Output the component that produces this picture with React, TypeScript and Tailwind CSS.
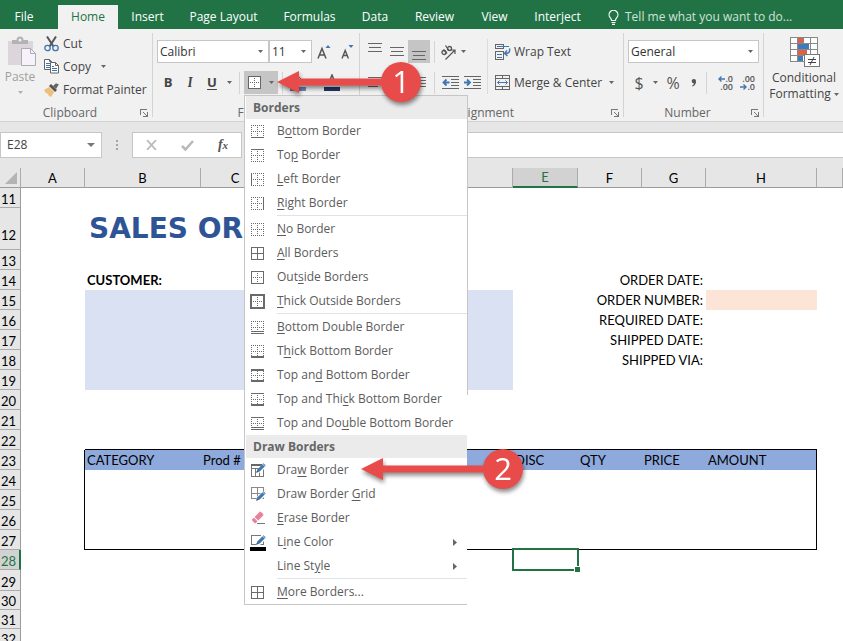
import React from "react";

type Side = "dot" | "thin" | "thick" | "double";

const TABS: { name: string; width: string }[] = [
  { name: "Insert", width: "w-[59px]" },
  { name: "Page Layout", width: "w-[93px]" },
  { name: "Formulas", width: "w-[79px]" },
  { name: "Data", width: "w-[52px]" },
  { name: "Review", width: "w-[67px]" },
  { name: "View", width: "w-[53px]" },
  { name: "Interject", width: "w-[73px]" },
];

function Caret({ dim = false }: { dim?: boolean }) {
  return (
    <svg width="5" height="3" viewBox="0 0 5 3" className={dim ? "shrink-0 text-[#b0b0b0]" : "shrink-0 text-[#666]"} aria-hidden="true">
      <path d="M0 0h5L2.500 3z" fill="currentColor" />
    </svg>
  );
}

function Rule() {
  return <span className="mx-1 h-[22px] w-px shrink-0 bg-[#d4d4d4]" />;
}

/* ---------- border glyphs used by the menu ---------- */

function BorderIcon({
  top = "dot",
  bottom = "dot",
  left = "dot",
  right = "dot",
  inner = "dot",
}: {
  top?: Side;
  bottom?: Side;
  left?: Side;
  right?: Side;
  inner?: Side;
}) {
  const dash = (s: Side) => (s === "dot" ? "1 1" : undefined);
  const w = (s: Side) => (s === "thick" ? 2 : 1);
  const topY = top === "thick" ? 2 : 1.5;
  const botY = bottom === "thick" ? 13 : 13.5;
  const leftX = left === "thick" ? 1 : 1.5;
  const rightX = right === "thick" ? 14 : 13.5;
  return (
    <svg width="15" height="15" viewBox="0 0 15 15" shapeRendering="crispEdges" stroke="#6a6a6a" fill="none" aria-hidden="true">
      <path d="M1 7.500h13" strokeDasharray={dash(inner)} />
      <path d="M7.500 1v13" strokeDasharray={dash(inner)} />
      <path d={`M1 ${topY}h13`} strokeWidth={w(top)} strokeDasharray={dash(top)} />
      {bottom === "double" ? (
        <path d="M1 11.500h13M1 13.500h13" />
      ) : (
        <path d={`M1 ${botY}h13`} strokeWidth={w(bottom)} strokeDasharray={dash(bottom)} />
      )}
      <path d={`M${leftX} 1v13`} strokeWidth={w(left)} strokeDasharray={dash(left)} />
      <path d={`M${rightX} 1v13`} strokeWidth={w(right)} strokeDasharray={dash(right)} />
    </svg>
  );
}

function ThickBoxIcon() {
  return (
    <svg width="15" height="15" viewBox="0 0 15 15" shapeRendering="crispEdges" stroke="#6a6a6a" fill="none" aria-hidden="true">
      <rect x="1" y="1" width="13" height="13" strokeWidth="2" />
      <path d="M3 7.500h9M7.500 3v9" strokeDasharray="1 1" />
    </svg>
  );
}

function Pencil() {
  return (
    <>
      <path d="M5.500 11.500l1-3.200 6-6 2.200 2.200-6 6z" fill="#3f76b0" />
      <path d="M5.200 11.800l.7-2 1.300 1.300z" fill="#444" />
      <path d="M11.300 2.800l2.500 2.500" stroke="#fff" strokeWidth=".8" />
    </>
  );
}

function DrawBorderIcon() {
  return (
    <svg width="17" height="16" viewBox="0 0 17 16" fill="none" aria-hidden="true">
      <path d="M1.500 2.500h12v12h-12zM1.500 6.500h12M5.500 6v8M9.500 6v8" stroke="#777" shapeRendering="crispEdges" />
      <path d="M1 2h13v2H1z" fill="#666" />
      <path d="M6 12l2-5 6-6 3 3-6 6z" fill="#fff" />
      <g transform="translate(1 -1)"><Pencil /></g>
    </svg>
  );
}

function DrawGridIcon() {
  return (
    <svg width="17" height="16" viewBox="0 0 17 16" fill="none" aria-hidden="true">
      <path d="M1.500 1.500h12v11h-12zM1.500 7.500h12M7.500 1v12" stroke="#888" shapeRendering="crispEdges" />
      <path d="M6 16l1-5 6-6 4 3-7 7z" fill="#fff" />
      <g transform="translate(1 3)"><Pencil /></g>
    </svg>
  );
}

function EraserIcon() {
  return (
    <svg width="17" height="16" viewBox="0 0 17 16" fill="none" aria-hidden="true">
      <path d="M4.500 7L9.500 2q.8-.8 1.600 0l2 2q.8.800 0 1.600L8.200 10.600z" fill="#e8829a" />
      <path d="M3.900 7.700l3.600 3.600-1.700 1.600q-.7.600-1.400 0L2.200 10.600q-.6-.7 0-1.400z" fill="#e8829a" />
      <path d="M7 13.500h8" stroke="#777" shapeRendering="crispEdges" />
    </svg>
  );
}

function LineColorIcon() {
  return (
    <svg width="17" height="17" viewBox="0 0 17 17" fill="none" aria-hidden="true">
      <path d="M11 1.500H1.500v9h12V6" stroke="#777" shapeRendering="crispEdges" />
      <path d="M0 13h16v4H0z" fill="#000" />
      <path d="M6 11l1-4 6-6 4 3-7 7z" fill="#fff" />
      <g transform="translate(1 -1)"><Pencil /></g>
    </svg>
  );
}

type Entry = { pre?: string; key: string; post: string; icon?: React.ReactNode; sub?: boolean };

const BORDER_GROUPS: Entry[][] = [
  [
    { pre: "B", key: "o", post: "ttom Border", icon: <BorderIcon bottom="thin" /> },
    { pre: "To", key: "p", post: " Border", icon: <BorderIcon top="thin" /> },
    { key: "L", post: "eft Border", icon: <BorderIcon left="thin" /> },
    { key: "R", post: "ight Border", icon: <BorderIcon right="thin" /> },
  ],
  [
    { key: "N", post: "o Border", icon: <BorderIcon /> },
    { key: "A", post: "ll Borders", icon: <BorderIcon top="thin" bottom="thin" left="thin" right="thin" inner="thin" /> },
    { pre: "Out", key: "s", post: "ide Borders", icon: <BorderIcon top="thin" bottom="thin" left="thin" right="thin" /> },
    { key: "T", post: "hick Outside Borders", icon: <ThickBoxIcon /> },
  ],
  [
    { key: "B", post: "ottom Double Border", icon: <BorderIcon bottom="double" /> },
    { pre: "T", key: "h", post: "ick Bottom Border", icon: <BorderIcon bottom="thick" /> },
    { pre: "Top an", key: "d", post: " Bottom Border", icon: <BorderIcon top="thick" bottom="thick" /> },
    { pre: "Top and Thi", key: "c", post: "k Bottom Border", icon: <BorderIcon top="thin" bottom="thick" /> },
    { pre: "Top and Do", key: "u", post: "ble Bottom Border", icon: <BorderIcon top="thin" bottom="double" /> },
  ],
];

const DRAW_GROUPS: Entry[][] = [
  [
    { pre: "Dra", key: "w", post: " Border", icon: <DrawBorderIcon /> },
    { pre: "Draw Border ", key: "G", post: "rid", icon: <DrawGridIcon /> },
    { key: "E", post: "rase Border", icon: <EraserIcon /> },
    { pre: "L", key: "i", post: "ne Color", icon: <LineColorIcon />, sub: true },
    { pre: "Line St", key: "y", post: "le", sub: true },
  ],
  [{ key: "M", post: "ore Borders...", icon: <BorderIcon top="thin" bottom="thin" left="thin" right="thin" inner="thin" /> }],
];

function MenuSection({ title, groups }: { title: string; groups: Entry[][] }) {
  return (
    <section>
      <h2 className="ml-px h-[23px] bg-[#ebebeb] pl-[7px] text-xs leading-[23px] font-bold text-[#666]">{title}</h2>
      {groups.map((group, g) => (
        <React.Fragment key={g}>
          {g > 0 && <div className="mb-px ml-8 h-px bg-[#dfe2e6]" />}
          {group.map((e) => (
            <button key={e.key + e.post} type="button" role="menuitem" className="flex h-6 w-full items-center pl-[5px] text-left text-xs whitespace-nowrap text-[#5c5c5c]">
              <span className="w-[27px] shrink-0">{e.icon}</span>
              <span className="flex-1">
                {e.pre}
                <u className="underline-offset-2">{e.key}</u>
                {e.post}
              </span>
              {e.sub && (
                <svg width="4" height="7" viewBox="0 0 4 7" className="mr-[10px]" aria-hidden="true">
                  <path d="M0 0l4 3.500L0 7z" fill="#666" />
                </svg>
              )}
            </button>
          ))}
        </React.Fragment>
      ))}
    </section>
  );
}

function BordersMenu() {
  return (
    <div role="menu" aria-label="Borders" className="absolute top-6 left-0 z-10 w-[223px] border-t border-b border-l border-[#c6c6c6] bg-white">
      <MenuSection title="Borders" groups={BORDER_GROUPS} />
      <MenuSection title="Draw Borders" groups={DRAW_GROUPS} />
      <span className="absolute -top-px -right-px h-[300px] w-px bg-[#c6c6c6]" />
    </div>
  );
}

/* ---------- ribbon ---------- */

function Group({ label, width, launcher = true, children }: { label: string; width: string; launcher?: boolean; children: React.ReactNode }) {
  return (
    <section className={`relative flex shrink-0 flex-col ${width}`}>
      <div className="flex-1">{children}</div>
      <div className="flex h-[15px] items-center text-xs text-[#666]">
        <span className="flex-1 text-center leading-[15px]">{label}</span>
        {launcher && (
          <button type="button" aria-label={`${label} settings`} className="mr-1 w-[9px]">
            <svg width="8" height="8" viewBox="0 0 8 8" fill="none" stroke="#777" shapeRendering="crispEdges" aria-hidden="true">
              <path d="M.5 6V.5H7M3 3l4 4M7.500 3v4.500H3" />
            </svg>
          </button>
        )}
      </div>
      <span className="absolute top-1 right-0 h-[84px] w-px bg-[#d4d4d4]" />
    </section>
  );
}

function Combo({ label, value, width }: { label: string; value: string; width: string }) {
  return (
    <div className={`relative h-[23px] shrink-0 ${width}`}>
      <select aria-label={label} defaultValue={value} className="h-full w-full appearance-none border border-[#c6c6c6] bg-white pl-[2px] text-xs text-[#333]">
        <option>{value}</option>
      </select>
      <span className="pointer-events-none absolute top-[10px] right-[6px]">
        <Caret />
      </span>
    </div>
  );
}

function Clipboard() {
  return (
    <Group label="Clipboard" width="w-[153px]">
      <div className="flex">
        <button type="button" className="flex w-10 flex-col items-center pt-[7px] text-xs text-[#a0a0a0]">
          <svg width="30" height="31" viewBox="0 0 30 31" fill="none" className="ml-1" aria-hidden="true">
            <path d="M1 5h25v24H1z" fill="#dcd6dc" />
            <path d="M5 8V4h4.500a3.500 3.500 0 0 1 7 0H21v4z" fill="#b3b3b3" />
            <circle cx="13" cy="4" r="1.500" fill="#f0f0f0" />
            <path d="M14.500 12.500h9l5 5v12h-14z" fill="#f7f1fa" stroke="#b0abb3" />
            <path d="M23.500 12.500v5h5" stroke="#b0abb3" />
          </svg>
          <span className="leading-5">Paste</span>
          <span className="pt-1"><Caret dim /></span>
        </button>
        <div className="flex flex-col pt-[3px] pl-1 text-xs text-[#444]">
          <button type="button" className="flex h-[23px] items-center gap-1">
            <svg width="15" height="16" viewBox="0 0 15 16" fill="none" aria-hidden="true">
              <path d="M3 .5l6.500 10M12 .5l-6.500 10" stroke="#555" strokeWidth="2" />
              <circle cx="3.500" cy="12" r="2.700" stroke="#3f76b0" strokeWidth="1.300" />
              <circle cx="11.500" cy="12" r="2.700" stroke="#3f76b0" strokeWidth="1.300" />
            </svg>
            Cut
          </button>
          <button type="button" className="flex h-[23px] items-center gap-1">
            <svg width="15" height="15" viewBox="0 0 15 15" fill="none" aria-hidden="true">
              <path d="M.5.500h5l2 2v8h-7zM5.500.500v2h2" stroke="#666" fill="#fff" />
              <path d="M2 4.500h4M2 6.500h4M2 8.500h4" stroke="#3f76b0" />
              <path d="M6.500 3.500h5l3 3v7.500h-8z" stroke="#666" fill="#fff" />
              <path d="M11.500 3.500v3h3" stroke="#666" />
              <path d="M8 7.500h2M8 9.500h5M8 11.500h5" stroke="#3f76b0" />
            </svg>
            Copy
            <span className="pl-[6px]"><Caret /></span>
          </button>
          <button type="button" className="flex h-[23px] items-center gap-1 whitespace-nowrap">
            <svg width="15" height="14" viewBox="0 0 15 14" fill="none" aria-hidden="true">
              <path d="M0 7l5-3 5 5-3 5q-3-1-3-3-3-1-4-4z" fill="#ecc079" />
              <path d="M5 3l2-2 6 6-2 2z" fill="#555" />
              <path d="M9 3l3-2.800 2.800 1.300L12 6z" fill="#666" />
            </svg>
            Format Painter
          </button>
        </div>
      </div>
    </Group>
  );
}

function FontGroup() {
  return (
    <Group label="Font" width="w-[207px]">
      <div className="flex flex-col gap-2 pt-[11px] pl-1 text-[#444]">
        <div className="flex h-[23px] items-center">
          <Combo label="Font name" value="Calibri" width="w-[112px]" />
          <Combo label="Font size" value="11" width="w-[43px]" />
          <button type="button" aria-label="Increase font size" className="flex h-[23px] w-6 items-center justify-center">
            <svg width="14" height="16" viewBox="0 0 14 16" fill="none" aria-hidden="true">
              <path d="M1 14.500L5 4.500l4 10M2.500 11h5" stroke="#555" strokeWidth="1.500" />
              <path d="M8.500 4L11 1l2.500 3z" fill="#3f76b0" />
            </svg>
          </button>
          <button type="button" aria-label="Decrease font size" className="flex h-[23px] w-[22px] items-center justify-center">
            <svg width="14" height="16" viewBox="0 0 14 16" fill="none" aria-hidden="true">
              <path d="M2 14.500l3.200-8 3.200 8M3.500 11.500h4" stroke="#555" strokeWidth="1.400" />
              <path d="M8.500 1h5L11 4z" fill="#3f76b0" />
            </svg>
          </button>
        </div>
        <div className="flex h-[23px] items-center text-[13px]">
          <button type="button" className="w-[22px] font-bold">B</button>
          <button type="button" className="w-[22px] font-serif font-bold italic">I</button>
          <button type="button" className="w-[22px] font-bold underline underline-offset-2">U</button>
          <button type="button" aria-label="Underline styles" className="flex h-5 w-3 items-center justify-center"><Caret /></button>
          <Rule />
          <div className="relative h-[23px] w-[34px] shrink-0">
            <button type="button" aria-label="Borders" aria-expanded="true" className="flex h-full w-full items-center justify-between bg-[#c5c5c5] pr-1 pl-1">
              <svg width="13" height="13" viewBox="0 0 13 13" shapeRendering="crispEdges" fill="#fff" stroke="#666" aria-hidden="true">
                <rect x=".5" y=".5" width="12" height="12" />
                <path d="M2 6.500h9M6.500 2v9" strokeDasharray="1 1" />
              </svg>
              <Caret />
            </button>
            <BordersMenu />
          </div>
          <Rule />
          <button type="button" aria-label="Fill color" className="ml-[3px] w-4">
            <svg width="16" height="17" viewBox="0 0 16 17" fill="none" aria-hidden="true">
              <path d="M3 7l5-5 5 5-5 4zM7 5V1" stroke="#666" fill="#fff" />
              <path d="M13 7q3 4 1 4t-1-4z" fill="#3f76b0" />
              <path d="M0 13h16v4H0z" fill="#7486b8" />
            </svg>
          </button>
          <button type="button" aria-label="Font color" className="ml-[18px] w-4">
            <svg width="16" height="17" viewBox="0 0 16 17" fill="none" aria-hidden="true">
              <path d="M4 11L8 1l4 10M5.500 8h5" stroke="#555" strokeWidth="1.500" />
              <path d="M0 13h16v4H0z" fill="#203864" />
            </svg>
          </button>
        </div>
      </div>
    </Group>
  );
}

function Lines({ d, label, active = false }: { d: string; label: string; active?: boolean }) {
  return (
    <button type="button" aria-label={label} className={`flex h-[23px] w-[22px] items-center justify-center ${active ? "bg-[#c5c5c5]" : ""}`}>
      <svg width="14" height="17" viewBox="0 0 14 17" stroke="#666" shapeRendering="crispEdges" aria-hidden="true">
        <path d={d} />
      </svg>
    </button>
  );
}

function Indent({ label, out = false }: { label: string; out?: boolean }) {
  return (
    <button type="button" aria-label={label} className="flex h-[23px] w-[22px] items-center justify-center">
      <svg width="17" height="13" viewBox="0 0 17 13" fill="none" aria-hidden="true">
        <path d="M0 .5h17M9 3.500h8M9 6.500h8M9 9.500h8M0 12.500h17" stroke="#666" shapeRendering="crispEdges" />
        <path d={out ? "M7.500 6.500H2M4.500 3.500l-3 3 3 3" : "M0 6.500h5.500M3 3.500l3 3-3 3"} stroke="#3f76b0" strokeWidth="1.800" />
      </svg>
    </button>
  );
}

function Alignment() {
  return (
    <Group label="Alignment" width="w-[264px]">
      <div className="flex pt-[11px] text-[#444]">
        <div className="flex w-[127px] flex-col gap-2 pl-1">
          <div className="flex h-[23px] items-center">
            <Lines label="Top align" d="M0 0.500h14M1 4.500h12M0 8.500h14" />
            <Lines label="Middle align" d="M0 4.500h14M1 8.500h12M0 12.500h14" />
            <Lines label="Bottom align" active d="M0 8.500h14M1 12.500h12M0 16.500h14" />
            <Rule />
            <button type="button" aria-label="Orientation" className="flex w-7 items-center gap-1 pl-px">
              <svg width="17" height="16" viewBox="0 0 17 16" fill="none" stroke="#555" className="shrink-0" aria-hidden="true">
                <path d="M5.500 15.500l9-9M11 6h4v4" strokeWidth="1.200" />
                <circle cx="4" cy="8.500" r="2" strokeWidth="1.300" />
                <path d="M3.500 5.500l3.500 4" strokeWidth="1.300" />
                <circle cx="9.500" cy="4.500" r="2" strokeWidth="1.300" />
                <path d="M5.500 1.500l3.500 5" strokeWidth="1.300" />
              </svg>
              <Caret />
            </button>
          </div>
          <div className="flex h-[23px] items-center">
            <Lines label="Align left" d="M0 3.500h14M0 6.500h10M0 9.500h14M0 12.500h10" />
            <Lines label="Center" d="M0 3.500h14M2 6.500h10M0 9.500h14M2 12.500h10" />
            <Lines label="Align right" d="M0 3.500h14M4 6.500h10M0 9.500h14M4 12.500h10" />
            <Rule />
            <Indent label="Decrease indent" out />
            <Indent label="Increase indent" />
          </div>
        </div>
        <span className="-mt-px h-[55px] w-px bg-[#dcdcdc]" />
        <div className="flex flex-col gap-2 pl-[7px] text-xs">
          <button type="button" className="flex h-[23px] items-center gap-[3px]">
            <svg width="16" height="16" viewBox="0 0 16 16" fill="none" aria-hidden="true">
              <path d="M.5.500h8v4h-8zM.5 7.500h8v8h-8z" stroke="#666" shapeRendering="crispEdges" />
              <path d="M2 2.500h12M2 10.500h5M2 13h5" stroke="#3f76b0" shapeRendering="crispEdges" />
              <path d="M14.500 4.500q1 5-4 5M12 6.500l-2.500 3 3 2.500" stroke="#3f76b0" strokeWidth="1.400" />
            </svg>
            Wrap Text
          </button>
          <button type="button" className="flex h-[23px] items-center gap-1 whitespace-nowrap">
            <svg width="15" height="15" viewBox="0 0 15 15" fill="none" aria-hidden="true">
              <path d="M.5.500h14v14H.5zM.5 3.500h14M.5 11.500h14M7.500.500v3M7.500 11.500v3" stroke="#666" shapeRendering="crispEdges" />
              <path d="M2.500 7.500h10M4.500 5.500l-2 2 2 2M10.500 5.500l2 2-2 2" stroke="#3f76b0" />
            </svg>
            <span className="w-[91px] text-left">Merge &amp; Center</span>
            <Caret />
          </button>
        </div>
      </div>
    </Group>
  );
}

function NumberGroup() {
  return (
    <Group label="Number" width="w-[140px]">
      <div className="flex flex-col gap-2 pt-[11px] pl-1 text-[#444]">
        <Combo label="Number format" value="General" width="w-[131px]" />
        <div className="flex h-[23px] items-center text-base text-[#555]">
          <button type="button" className="w-[22px]">$</button>
          <button type="button" aria-label="Accounting formats" className="flex h-5 w-[10px] items-center justify-center"><Caret /></button>
          <button type="button" className="w-[26px]">%</button>
          <button type="button" aria-label="Comma style" className="flex w-4 items-center justify-center">
            <svg width="6" height="8" viewBox="0 0 6 8" aria-hidden="true">
              <path d="M2.800 0a2.200 2.200 0 0 1 2.200 2.500Q5 6 1.500 7.500L1 6.700Q2.800 5.800 3 4.400A2.200 2.200 0 0 1 2.800 0z" fill="#555" />
            </svg>
          </button>
          <Rule />
          <button type="button" className="flex w-[22px] flex-col items-end text-[9px] leading-[8px] font-semibold">
            <span className="flex items-center">
              <svg width="7" height="6" viewBox="0 0 7 6" fill="none" stroke="#3f76b0" strokeWidth="1.400" aria-hidden="true"><path d="M7 3H1M3.500.500L1 3l2.500 2.500" /></svg>
              .0
            </span>
            <span>.00</span>
          </button>
          <button type="button" className="flex w-[22px] flex-col items-end text-[9px] leading-[8px] font-semibold">
            <span>.00</span>
            <span className="flex items-center">
              <svg width="7" height="6" viewBox="0 0 7 6" fill="none" stroke="#3f76b0" strokeWidth="1.400" aria-hidden="true"><path d="M0 3h6M3.500.500L6 3 3.500 5.500" /></svg>
              .0
            </span>
          </button>
        </div>
      </div>
    </Group>
  );
}

function Styles() {
  return (
    <div className="flex-1 pt-2">
      <button type="button" className="flex w-20 flex-col items-center text-xs leading-4 text-[#444]">
        <svg width="30" height="31" viewBox="0 0 30 31" fill="none" shapeRendering="crispEdges" className="ml-[2px]" aria-hidden="true">
          <path d="M.5.500h27v24H.5z" fill="#fff" />
          <path d="M8 1h6v5H8zM8 13h9v5H8z" fill="#dc6147" />
          <path d="M8 7h11v5H8zM8 19h5v5H8z" fill="#3f7bba" />
          <path d="M.5.500h27v24H.5zM7.500 0v24M13.500 0v6M20.500 0v24M0 6.500h28M0 12.500h28M0 18.500h14" stroke="#888" />
          <path d="M14.500 17.500h15v12h-15z" fill="#fff" stroke="#777" />
          <path d="M18 22.500h8M18 25.500h8" stroke="#444" />
          <path d="M24 20l-4 8" stroke="#444" shapeRendering="auto" />
        </svg>
        <span className="pt-[2px]">Conditional</span>
        <span className="flex items-center gap-[3px]">
          Formatting <Caret />
        </span>
      </button>
    </div>
  );
}

/* ---------- worksheet ---------- */

const HEAD = "border-r border-b border-[#ababab] border-b-[#9b9b9b] bg-[#e6e6e6] p-0 font-normal";

const ROWS: { n: number; h: string }[] = [
  { n: 11, h: "h-5" },
  { n: 12, h: "h-[42px]" },
  { n: 13, h: "h-5" },
  { n: 14, h: "h-5" },
  { n: 15, h: "h-5" },
  { n: 16, h: "h-5" },
  { n: 17, h: "h-5" },
  { n: 18, h: "h-5" },
  { n: 19, h: "h-5" },
  { n: 20, h: "h-5" },
  { n: 21, h: "h-5" },
  { n: 22, h: "h-5" },
  { n: 23, h: "h-5" },
  { n: 24, h: "h-5" },
  { n: 25, h: "h-5" },
  { n: 26, h: "h-5" },
  { n: 27, h: "h-5" },
  { n: 28, h: "h-5" },
  { n: 29, h: "h-[21px]" },
  { n: 30, h: "h-[19px]" },
  { n: 31, h: "h-[19px]" },
  { n: 32, h: "h-[19px]" },
];

const ORDER_LABELS: Record<number, string> = {
  14: "ORDER DATE:",
  15: "ORDER NUMBER:",
  16: "REQUIRED DATE:",
  17: "SHIPPED DATE:",
  18: "SHIPPED VIA:",
};

const ITEM_HEADS = ["CATEGORY", "Prod #", "", "DISC", "QTY", "PRICE", "AMOUNT"];

function RowCells({ n }: { n: number }) {
  if (n === 12) {
    return (
      <>
        <td />
        <td colSpan={3} className="p-0 pl-1 font-['DejaVu_Sans',sans-serif] text-[28px] leading-8 font-bold whitespace-nowrap text-[#2f5496]">SALES ORDER</td>
        <td colSpan={5} />
      </>
    );
  }
  if (n >= 14 && n <= 19) {
    return (
      <>
        <td />
        {n === 14 ? (
          <td colSpan={3} className="p-0 pl-[2px] font-bold">CUSTOMER:</td>
        ) : (
          <td colSpan={3} className="bg-[#d9e1f2] p-0" />
        )}
        <td />
        <td colSpan={2} className="p-0 pr-[3px] text-right whitespace-nowrap">{ORDER_LABELS[n]}</td>
        <td className={n === 15 ? "bg-[#fce4d6]" : ""} />
        <td />
      </>
    );
  }
  if (n >= 22 && n <= 27) {
    const line = n === 22 || n === 27 ? "border-b border-black" : "";
    return (
      <>
        <td className={n > 22 ? "border-r border-black" : ""} />
        {ITEM_HEADS.map((text, i) => (
          <td key={i} className={`p-0 pl-[2px] ${line} ${n === 23 ? "bg-[#8ea9db]" : ""} ${i === 6 && n > 22 ? "border-r border-black" : ""}`}>
            {n === 23 ? text : ""}
          </td>
        ))}
        <td />
      </>
    );
  }
  if (n === 28) {
    return (
      <>
        <td colSpan={4} />
        <td className="relative p-0">
          <span className="absolute -inset-x-px -top-[2px] -bottom-px border-2 border-[#217346]" />
          <span className="absolute -right-[2px] -bottom-[2px] size-[6px] border-t border-l border-white bg-[#217346]" />
        </td>
        <td colSpan={4} />
      </>
    );
  }
  return <td colSpan={9} />;
}

function Sheet() {
  return (
    <table className="w-full table-fixed border-separate border-spacing-0 font-[Lato,Carlito,sans-serif] text-[13px] leading-4 text-black">
      <colgroup>
        <col className="w-[21px]" />
        <col className="w-16" />
        <col className="w-[116px]" />
        <col className="w-[69px]" />
        <col className="w-[243px]" />
        <col className="w-[65px]" />
        <col className="w-16" />
        <col className="w-16" />
        <col className="w-[111px]" />
        <col />
      </colgroup>
      <thead>
        <tr className="h-5">
          <th className={HEAD} aria-label="Select all">
            <svg width="12" height="12" viewBox="0 0 12 12" className="ml-auto mr-[3px]" aria-hidden="true">
              <path d="M12 0v12H0z" fill="#b4b4b4" />
            </svg>
          </th>
          {["A", "B", "C", "D", "E", "F", "G", "H", ""].map((c) => (
            <th
              key={c}
              scope="col"
              className={
                c === "E"
                  ? "border-r border-b-2 border-r-[#ababab] border-b-[#217346] bg-[#d2d2d2] p-0 font-normal text-[#217346]"
                  : HEAD
              }
            >
              {c}
            </th>
          ))}
        </tr>
      </thead>
      <tbody>
        {ROWS.map(({ n, h }) => (
          <tr key={n} className={h}>
            <th
              scope="row"
              className={`border-b border-[#ababab] p-0 pt-px pl-px text-left align-bottom font-normal ${
                n === 28 ? "border-r-2 border-r-[#217346] bg-[#d2d2d2] text-[#217346]" : "border-r border-r-[#9b9b9b] bg-[#e6e6e6]"
              } ${n === 12 ? "pb-[6px]" : ""}`}
            >
              {n}
            </th>
            <RowCells n={n} />
          </tr>
        ))}
      </tbody>
    </table>
  );
}

/* ---------- numbered callouts ---------- */

function Callout({ n, length, place }: { n: number; length: number; place: string }) {
  return (
    <svg width={length + 24} height="48" viewBox={`0 0 ${length + 24} 48`} className={`pointer-events-none absolute z-20 drop-shadow-[1px_3px_2px_rgba(0,0,0,0.45)] ${place}`} role="img" aria-label={`Step ${n}`}>
      <path d={`M0 22L22 11v7.500h${length - 22}v7H22V33z`} fill="#e84c4a" />
      <circle cx={length} cy="22" r="20" fill="#e84c4a" />
      <text x={length} y="33" textAnchor="middle" fill="#fff" className="font-['Open_Sans',sans-serif] text-[31px]">
        {n}
      </text>
    </svg>
  );
}

export default function App() {
  return (
    <div className="relative flex h-screen flex-col overflow-hidden bg-white font-['Open_Sans','Noto_Sans',sans-serif] text-xs">
      <nav className="flex h-[29px] shrink-0 items-end bg-[#217346] text-white">
        <button type="button" className="h-6 w-[58px] pr-[10px]">File</button>
        <button type="button" className="h-6 w-[60px] bg-[#f1f1f1] text-[#217346]">Home</button>
        {TABS.map((t) => (
          <button key={t.name} type="button" className={`h-6 whitespace-nowrap ${t.width}`}>
            {t.name}
          </button>
        ))}
        <button type="button" className="ml-[14px] flex h-6 items-center gap-[6px] whitespace-nowrap text-[#cfe3d7]">
          <svg width="11" height="15" viewBox="0 0 11 15" fill="none" stroke="#fff" strokeWidth="1.200" aria-hidden="true">
            <path d="M3.500 10.500Q3.500 8.800 2.200 7.600A4.400 4.400 0 1 1 8.800 7.600Q7.500 8.800 7.500 10.500zM3.500 12.500h4M4 14.300h3" />
          </svg>
          Tell me what you want to do...
        </button>
      </nav>

      <div className="flex h-[93px] shrink-0 border-b border-[#d2d2d2] bg-[#f1f1f1] pb-[1px]">
        <Clipboard />
        <FontGroup />
        <Alignment />
        <NumberGroup />
        <Styles />
      </div>

      <div className="flex h-[46px] shrink-0 items-start bg-[#e6e6e6] pt-[10px]">
        <div className="flex h-[26px] w-[102px] shrink-0 items-center border border-[#c6c6c6] bg-white">
          <input aria-label="Name box" defaultValue="E28" className="w-[86px] bg-transparent pl-[6px] text-xs text-[#444] outline-none" />
          <button type="button" aria-label="Named ranges">
            <svg width="8" height="4" viewBox="0 0 8 4" aria-hidden="true"><path d="M0 0h8L4 4z" fill="#777" /></svg>
          </button>
        </div>
        <svg width="2" height="10" viewBox="0 0 2 10" className="mx-[14px] mt-2 shrink-0" fill="#a6a6a6" aria-hidden="true">
          <path d="M0 0h2v2H0zM0 4h2v2H0zM0 8h2v2H0z" />
        </svg>
        <div className="flex h-[26px] w-[110px] shrink-0 items-center border border-[#c6c6c6] bg-white">
          <button type="button" aria-label="Cancel" className="flex w-9 justify-center">
            <svg width="11" height="10" viewBox="0 0 11 10" stroke="#b9b9b9" strokeWidth="1.800" aria-hidden="true"><path d="M1 0l9 10M10 0L1 10" /></svg>
          </button>
          <button type="button" aria-label="Enter" className="flex w-9 justify-center">
            <svg width="13" height="11" viewBox="0 0 13 11" fill="none" stroke="#b9b9b9" strokeWidth="2.500" aria-hidden="true"><path d="M1 6l3.500 3.500L12 1" /></svg>
          </button>
          <button type="button" aria-label="Insert function" className="w-9 font-['Liberation_Serif',serif] text-sm font-bold text-[#555] italic">
            f<span className="text-[11px]">x</span>
          </button>
        </div>
        <input aria-label="Formula bar" className="ml-1 h-[26px] min-w-0 flex-1 border-y border-[#c6c6c6] bg-white outline-none" />
      </div>

      <Sheet />

      <Callout n={1} length={124} place="top-[60px] left-[277px]" />
      <Callout n={2} length={142} place="top-[447px] left-[361px]" />
    </div>
  );
}
